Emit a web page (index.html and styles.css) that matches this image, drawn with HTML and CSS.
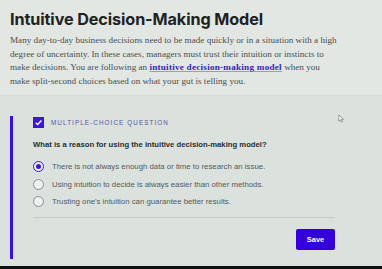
FILE: index.html
```html
<!DOCTYPE html>
<html>
<head>
<meta charset="utf-8">
<link rel="stylesheet" href="styles.css">
</head>
<body>
<div class="screen">
  <section class="intro">
    <h1 class="title">Intuitive Decision-Making Model</h1>
    <p class="text">Many day-to-day business decisions need to be made quickly or in a situation with a high degree of uncertainty. In these cases, managers must trust their intuition or instincts to make decisions. You are following an <span class="link">intuitive decision-making model</span> when you make split-second choices based on what your gut is telling you.</p>
  </section>
  <section class="quiz">
    <div class="bar"></div>
    <div class="quiz-body">
      <div class="label-row">
        <span class="check"><svg viewBox="0 0 12 12" width="11" height="11"><rect width="12" height="12" fill="#3a16d6"/><path d="M3 6.2 L5.1 8.2 L9.2 3.8" fill="none" stroke="#fff" stroke-width="1.6"/></svg></span>
        <span class="label">MULTIPLE-CHOICE QUESTION</span>
      </div>
      <p class="question">What is a reason for using the intuitive decision-making model?</p>
      <ul class="options">
        <li class="option"><span class="radio on"></span>There is not always enough data or time to research an issue.</li>
        <li class="option"><span class="radio"></span>Using intuition to decide is always easier than other methods.</li>
        <li class="option"><span class="radio"></span>Trusting one's intuition can guarantee better results.</li>
      </ul>
      <div class="rule"></div>
      <div class="actions"><button class="save">Save</button></div>
    </div>
    <svg class="cursor" viewBox="0 0 8 10" width="7" height="9"><path d="M1 1 L1 8 L2.8 6.4 L4.2 9 L5.2 8.5 L3.9 6 L6.3 6 Z" fill="#fff" stroke="#666" stroke-width="0.7"/></svg>
  </section>
  <div class="bottom"></div>
</div>
</body>
</html>
```
FILE: styles.css
```css
html, body { margin: 0; padding: 0; }
body { width: 382px; height: 269px; overflow: hidden; background: #dfe4e0; }
.screen { display: flex; flex-direction: column; height: 269px; }
.intro { background: #e3e7e3; padding: 9px 10px 0 10px; height: 86px; border-bottom: 1px solid #d3d9d5; }
.title { margin: 0; font-family: "Inter", "Liberation Sans", sans-serif; font-weight: 700; font-size: 16.2px; line-height: 20px; color: #1e2222; letter-spacing: -0.1px; }
.text { margin: 5px 0 0 0; font-family: "Liberation Serif", serif; font-size: 9.15px; line-height: 13.6px; color: #4a4e50; width: 331px; }
.link { color: #3524b0; font-weight: 700; letter-spacing: 0.25px; text-decoration: underline; text-decoration-color: #9d9bb8; text-underline-offset: 1px; }
.quiz { position: relative; flex: 1; display: flex; padding: 20px 0 0 10px; background: #dbe1dd; }
.bar { width: 3px; height: 143px; background: #3a10e0; }
.quiz-body { margin-left: 20px; width: 302px; }
.label-row { display: flex; align-items: center; gap: 7px; height: 13px; }
.check { display: flex; }
.label { font-family: "Liberation Sans", sans-serif; font-size: 6.3px; letter-spacing: 1.1px; color: #5753a8; }
.question { margin: 11px 0 0 0; font-family: "Liberation Sans", sans-serif; font-weight: 700; font-size: 7.7px; color: #2a2d30; }
.options { list-style: none; margin: 9px 0 0 0; padding: 0; }
.option { display: flex; align-items: center; height: 17.5px; font-family: "Liberation Sans", sans-serif; font-size: 7.8px; color: #55595c; }
.radio { box-sizing: border-box; width: 11px; height: 11px; border-radius: 50%; border: 1px solid #8a8f93; background: #eef1ef; margin: 0 8px 0 0; flex: none; display: flex; align-items: center; justify-content: center; }
.radio.on { border: 1.3px solid #3a16d6; background: #f0f2f0; }
.radio.on::after { content: ""; width: 5px; height: 5px; border-radius: 50%; background: #3a16d6; }
.rule { height: 1px; background: #c4cac6; margin-top: 6px; }
.actions { display: flex; justify-content: flex-end; margin-top: 11px; }
.save { width: 39px; height: 21px; background: #3300d9; color: #fff; border: none; border-radius: 2px; font-family: "Liberation Sans", sans-serif; font-weight: 700; font-size: 7.5px; padding: 0; }
.cursor { position: absolute; left: 338px; top: 18px; }
.bottom { height: 3px; background: #111; }
```
